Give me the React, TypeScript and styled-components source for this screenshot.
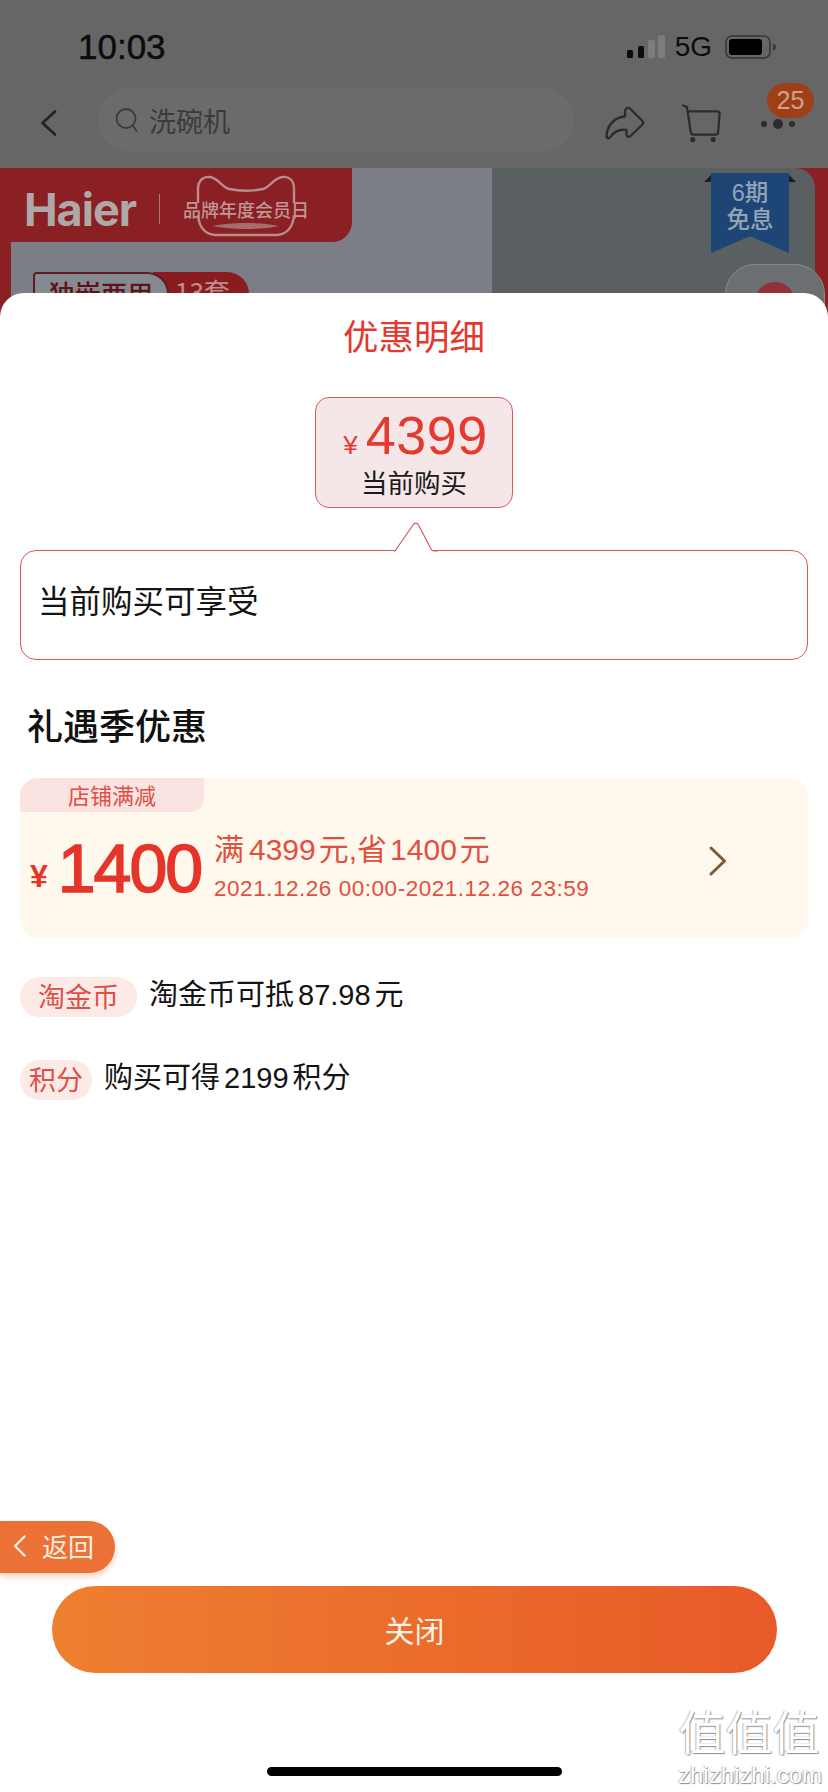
import React from "react";
import styled, { createGlobalStyle } from "styled-components";

const GlobalStyle = createGlobalStyle`
  html, body {
    margin: 0;
    padding: 0;
    background: #fff;
  }
  * {
    box-sizing: border-box;
  }
`;

const FONT = `"Liberation Sans", "Noto Sans CJK SC", sans-serif`;
const CJK = `"Noto Sans CJK SC", "Liberation Sans", sans-serif`;

const Page = styled.div`
  position: relative;
  width: 828px;
  height: 1792px;
  overflow: hidden;
  display: flex;
  flex-direction: column;
  background: #666;
  font-family: ${FONT};
`;

const StatusBar = styled.div`
  height: 88px;
  display: flex;
  align-items: center;
  padding: 6px 50px 0 78px;
`;

const Time = styled.div`
  font-size: 35px;
  font-weight: 500;
  color: #0c0c0c;
  margin-right: auto;
  -webkit-text-stroke: 0.5px #0c0c0c;
`;

const Network = styled.div`
  font-size: 28px;
  color: #0c0c0c;
  margin: 0 13px 0 10px;
`;

const NavBar = styled.div`
  height: 64px;
  margin-bottom: 16px;
  display: flex;
  align-items: center;
  padding-left: 40px;
`;

const NavIcon = styled.svg`
  margin-top: 6px;
`;

const SearchPill = styled.div`
  width: 476px;
  height: 64px;
  margin: 0 31px 0 41px;
  border-radius: 32px;
  background: #6b6b6b;
  display: flex;
  align-items: center;
  padding-left: 17px;
  gap: 10px;
  font-family: ${CJK};
  font-size: 27px;
  color: #3b3b3b;
`;

const CartIcon = styled(NavIcon)`
  margin-left: 37px;
  margin-right: 38px;
`;

const MoreWrap = styled.div`
  position: relative;
  width: 36px;
  height: 14px;
  margin-top: 8px;
`;

const CountBadge = styled.div`
  position: absolute;
  left: 6px;
  top: -34px;
  width: 47px;
  height: 35px;
  border-radius: 18px;
  background: #9f3f18;
  color: #cfa28a;
  font-size: 25px;
  line-height: 35px;
  text-align: center;
`;

const Hero = styled.div`
  position: relative;
  height: 149px;
  overflow: hidden;
  background: #8a2024;
  padding: 13px 13px 0 11px;
  flex-shrink: 0;
`;

const HeroPanel = styled.div`
  height: 200px;
  border-radius: 0 20px 0 0;
  background: linear-gradient(90deg, #7b7f85 0, #7b7f85 481px, #5a5f62 481px);
`;

const BrandTab = styled.div`
  width: 352px;
  height: 74px;
  margin: -13px 0 0 -11px;
  background: #8a2024;
  border-radius: 0 0 20px 0;
  display: flex;
  align-items: center;
  padding: 8px 0 0 24px;
`;

const BrandName = styled.div`
  width: 112px;
  font-family: "Inter", ${FONT};
  font-size: 45px;
  font-weight: 700;
  letter-spacing: -1px;
  color: #b0a8a8;
`;

const BrandDivider = styled.div`
  width: 1px;
  height: 30px;
  margin: 0 23px 0 23px;
  background: #a9797a;
`;

const BrandEvent = styled.div`
  position: relative;
  font-family: ${CJK};
  font-size: 18px;
  font-weight: 500;
  color: #c09596;
  white-space: nowrap;
`;

const CatOutline = styled.svg`
  position: absolute;
  left: 12px;
  top: -21px;
`;

const HeroTags = styled.div`
  display: flex;
  margin: 30px 0 0 22px;
  height: 44px;
  font-family: ${CJK};
  font-size: 26px;
  line-height: 38px;
`;

const TagLabel = styled.div`
  width: 136px;
  border: 2px solid #5d1c1f;
  border-radius: 4px 22px 0 0;
  color: #5d1416;
  font-weight: 500;
  text-align: center;
  background: #858a90;
  position: relative;
  z-index: 1;
`;

const TagCount = styled.div`
  width: 96px;
  margin-left: -16px;
  padding-left: 22px;
  border-radius: 0 22px 0 0;
  background: #8a1c20;
  color: #bd8f8f;
`;

const RibbonWrap = styled.div`
  position: absolute;
  left: 711px;
  top: 5px;
  width: 78px;
  height: 80px;

  &::before,
  &::after {
    content: "";
    position: absolute;
    top: 2px;
    border-bottom: 7px solid #1b1c22;
  }
  &::before {
    left: -7px;
    border-left: 7px solid transparent;
  }
  &::after {
    right: -7px;
    border-right: 7px solid transparent;
  }
`;

const RibbonBody = styled.div`
  height: 100%;
  background: #1d4676;
  clip-path: polygon(0 0, 100% 0, 100% 100%, 50% 79%, 0 100%);
  color: #93a2b4;
  font-family: ${FONT};
  font-size: 23.5px;
  font-weight: 500;
  line-height: 27px;
  text-align: center;
  padding-top: 7px;
`;

const FloatButton = styled.div`
  position: absolute;
  left: 725px;
  top: 96px;
  width: 100px;
  height: 90px;
  border: 1px solid #878b8d;
  border-radius: 30px;
  background: #6b6f71;
  display: flex;
  justify-content: center;
  padding-top: 17px;

  &::after {
    content: "";
    width: 40px;
    height: 40px;
    border-radius: 50%;
    background: #933038;
  }
`;

const Sheet = styled.div`
  position: relative;
  z-index: 2;
  flex: 1;
  margin-top: -24px;
  border-radius: 24px 24px 0 0;
  background: #fff;
  display: flex;
  flex-direction: column;
  padding-top: 22px;
`;

const Title = styled.div`
  height: 40px;
  font-family: ${CJK};
  font-size: 35.5px;
  line-height: 40px;
  color: #e4382e;
  text-align: center;
`;

const PriceBox = styled.div`
  width: 198px;
  height: 111px;
  margin: 42px auto 0;
  border: 1px solid #d8595c;
  border-radius: 14px;
  background: #f5e6e7;
  display: flex;
  flex-direction: column;
  align-items: center;
  padding-top: 13px;
`;

const PriceRow = styled.div`
  display: flex;
  align-items: baseline;
  color: #e63a30;
  line-height: 48px;
  margin-left: 3px;
`;

const PriceYen = styled.span`
  font-size: 26px;
  margin-right: 8px;
`;

const PriceValue = styled.span`
  font-size: 54px;
  letter-spacing: 0.5px;
`;

const PriceCaption = styled.div`
  font-family: ${CJK};
  font-size: 26.5px;
  line-height: 26px;
  color: #1a1a1a;
`;

const Bubble = styled.div`
  position: relative;
  height: 110px;
  margin: 42px 20px 0;
  border: 1px solid #d8595c;
  border-radius: 16px;
  padding: 26px 0 0 17px;
  font-family: ${CJK};
  font-size: 31.5px;
  line-height: 44px;
  color: #141414;
`;

const BubbleTip = styled.svg`
  position: absolute;
  left: 373px;
  top: -29px;
`;

const SectionTitle = styled.div`
  height: 50px;
  margin: 39px 0 0 27px;
  font-family: ${CJK};
  font-size: 36px;
  font-weight: 500;
  line-height: 50px;
  color: #111;
`;

const DealCard = styled.div`
  height: 160px;
  margin: 29px 20px 0;
  border-radius: 18px;
  background: #fff8ec;
  display: flex;
  flex-direction: column;
`;

const DealTag = styled.div`
  width: 184px;
  height: 34px;
  border-radius: 18px 0 14px 0;
  background: #fae3e0;
  font-family: ${CJK};
  font-size: 22px;
  line-height: 32px;
  color: #df4f48;
  text-align: center;
`;

const DealBody = styled.div`
  display: flex;
  align-items: center;
  padding-left: 10px;
  margin-top: 11px;
`;

const DealAmount = styled.div`
  display: flex;
  align-items: center;
  color: #e5352b;
  width: 184px;
  margin-top: 5px;
`;

const DealYen = styled.span`
  font-size: 32px;
  font-weight: 700;
  margin: 16px 10px 0 0;
`;

const DealValue = styled.span`
  font-size: 68px;
  line-height: 70px;
  letter-spacing: -2px;
  -webkit-text-stroke: 1.6px #e5352b;
`;

const DealInfo = styled.div`
  color: #e0503f;
  width: 495px;
  margin-top: 7px;
`;

const DealHeadline = styled.div`
  font-size: 30px;
  line-height: 40px;
`;

const DealPeriod = styled.div`
  font-size: 22.5px;
  line-height: 38px;
  letter-spacing: 0.53px;
  white-space: nowrap;
`;

const DealArrow = styled.svg`
  margin-bottom: 10px;
`;

const Gap = styled.span`
  display: inline-block;
  width: ${(p: { $w: number }) => p.$w}px;
`;

const BenefitRow = styled.div<{ $top: number; $gap: number }>`
  display: flex;
  align-items: center;
  height: 40px;
  margin: ${(p) => p.$top}px 0 0 20px;
  gap: ${(p) => p.$gap}px;
`;

const BenefitPill = styled.div<{ $width: number }>`
  width: ${(p) => p.$width}px;
  height: 40px;
  border-radius: 20px;
  background: #fbeae6;
  color: #df4f48;
  font-family: ${CJK};
  font-size: 27px;
  line-height: 37px;
  text-align: center;
`;

const BenefitText = styled.div`
  font-size: 29px;
  color: #141414;
  margin-bottom: 10px;
`;

const CloseButton = styled.div`
  height: 87px;
  margin: auto 51px 0 52px;
  border-radius: 44px;
  background: linear-gradient(90deg, #ee7f30, #e85a28);
  color: #fdf0e4;
  font-family: ${CJK};
  font-size: 30px;
  line-height: 87px;
  text-align: center;
`;

const HomeBar = styled.div`
  width: 295px;
  height: 9px;
  margin: 94px auto 16px;
  border-radius: 5px;
  background: #000;
`;

const BackPill = styled.div`
  position: absolute;
  z-index: 3;
  left: 0;
  top: 1521px;
  width: 115px;
  height: 52px;
  border-radius: 0 26px 26px 0;
  background: #ec7136;
  box-shadow: 0 4px 6px rgba(236, 113, 54, 0.3);
  display: flex;
  align-items: center;
  padding: 0 0 3px 13px;
  gap: 16px;
  color: #fdeee0;
  font-family: ${CJK};
  font-size: 26px;
`;

const Watermark = styled.div`
  position: absolute;
  z-index: 3;
  left: 678px;
  top: 1704px;
  width: 142px;
  text-align: center;
  color: #fff;
  text-shadow: 1px 1px 1px #8e8e8e, -1px 0 1px #bdbdbd;
`;

const WatermarkMark = styled.div`
  font-family: ${FONT};
  font-size: 47px;
  line-height: 60px;
  white-space: nowrap;
`;

const WatermarkSite = styled.div`
  font-size: 24px;
  line-height: 22px;
  white-space: nowrap;
`;

const App: React.FC = () => {
  return (
    <Page>
      <GlobalStyle />
      <StatusBar>
        <Time>10:03</Time>
        <svg width="38" height="24" viewBox="0 0 38 24">
          <rect x="0" y="15" width="6" height="8" rx="1.5" fill="#0c0c0c" />
          <rect x="11" y="11" width="6" height="12" rx="1.5" fill="#0c0c0c" />
          <rect x="21" y="5" width="7" height="18" rx="1.5" fill="#7c7c7c" />
          <rect x="31" y="0" width="7" height="23" rx="1.5" fill="#7c7c7c" />
        </svg>
        <Network>5G</Network>
        <svg width="53" height="24" viewBox="0 0 53 24">
          <rect x="1" y="1" width="44" height="22" rx="6" fill="none" stroke="#363636" strokeWidth="1.6" />
          <rect x="4" y="4" width="33" height="16" rx="3" fill="#000" />
          <path d="M48 8.5c2 .6 3 2 3 3.5s-1 2.900-3 3.500z" fill="#363636" />
        </svg>
      </StatusBar>

      <NavBar>
        <NavIcon width="17" height="26" viewBox="0 0 17 26">
          <path d="M15 1.500L2.500 13L15 24.500" fill="none" stroke="#222" strokeWidth="2.600" strokeLinecap="round" strokeLinejoin="round" />
        </NavIcon>
        <SearchPill>
          <svg width="24" height="26" viewBox="0 0 24 26">
            <circle cx="11" cy="11.500" r="9.500" fill="none" stroke="#3b3b3b" strokeWidth="1.800" />
            <path d="M18 19L21.500 24" stroke="#3b3b3b" strokeWidth="1.800" strokeLinecap="round" />
          </svg>
          洗碗机
        </SearchPill>
        <NavIcon width="40" height="34" viewBox="0 0 40 34">
          <path
            d="M21 3C22 1.500 24 1.500 25.500 3L37 14.500C38.500 16 38.500 17.500 37 19L25.500 30C24 31.500 21.500 30.500 21.500 28.500V24C14 23 9 25.500 5 31.500C3.500 33 1.500 32 1.500 30C2 19 10 11 20 10.500V5C20 4 20.500 3.500 21 3Z"
            fill="none"
            stroke="#2c2c2c"
            strokeWidth="2.400"
            strokeLinejoin="round"
          />
        </NavIcon>
        <CartIcon width="41" height="40" viewBox="0 0 42 40">
          <path d="M1 2L5 3.500L9 29.500C9.500 31.500 10.500 32 12 32H34C36 32 37 31 37 29.500L38.500 10.500C38.500 9 37.500 8 36 8H6" fill="none" stroke="#2c2c2c" strokeWidth="2.300" strokeLinecap="round" strokeLinejoin="round" />
          <circle cx="11" cy="37" r="2.600" fill="#2c2c2c" />
          <circle cx="32" cy="37" r="2.600" fill="#2c2c2c" />
        </CartIcon>
        <MoreWrap>
          <svg width="36" height="14" viewBox="0 0 36 14">
            <circle cx="3" cy="7" r="3" fill="#2c2c2c" />
            <circle cx="17" cy="7" r="5" fill="#2c2c2c" />
            <circle cx="31" cy="7" r="3" fill="#2c2c2c" />
          </svg>
          <CountBadge>25</CountBadge>
        </MoreWrap>
      </NavBar>

      <Hero>
        <HeroPanel>
          <BrandTab>
            <BrandName>Haier</BrandName>
            <BrandDivider />
            <BrandEvent>
              <CatOutline width="102" height="62" viewBox="0 0 102 62">
                <path
                  d="M3 28V14C3 5 9 1 15 2C23 3 27 12 34 14C44 16 58 16 68 14C75 12 79 3 87 2C94 1 99 5 99 14V28M3 40C4 52 10 59 20 60H82C92 59 98 52 99 40"
                  fill="none"
                  stroke="#b98c8d"
                  strokeWidth="2.400"
                />
                <path d="M18 51C35 47 67 47 84 51C67 55 35 55 18 51Z" fill="#a56c6d" />
              </CatOutline>
              品牌年度会员日
            </BrandEvent>
          </BrandTab>
          <HeroTags>
            <TagLabel>独嵌两用</TagLabel>
            <TagCount>13套</TagCount>
          </HeroTags>
        </HeroPanel>
        <RibbonWrap>
          <RibbonBody>
            6期
            <br />
            免息
          </RibbonBody>
        </RibbonWrap>
        <FloatButton />
      </Hero>

      <Sheet>
        <Title>优惠明细</Title>
        <PriceBox>
          <PriceRow>
            <PriceYen>¥</PriceYen>
            <PriceValue>4399</PriceValue>
          </PriceRow>
          <PriceCaption>当前购买</PriceCaption>
        </PriceBox>
        <Bubble>
          <BubbleTip width="44" height="30" viewBox="0 0 44 30">
            <path
              d="M0 29H1L19 3C20.500 0.600 23 0.600 24.500 3L37 27C37.500 28.500 38.500 29 40 29H44"
              fill="#fff"
              stroke="#d8595c"
              strokeWidth="1.200"
            />
          </BubbleTip>
          当前购买可享受
        </Bubble>
        <SectionTitle>礼遇季优惠</SectionTitle>
        <DealCard>
          <DealTag>店铺满减</DealTag>
          <DealBody>
            <DealAmount>
              <DealYen>¥</DealYen>
              <DealValue>1400</DealValue>
            </DealAmount>
            <DealInfo>
              <DealHeadline>
                满<Gap $w={5} />4399<Gap $w={3} />元,省<Gap $w={3} />1400<Gap $w={3} />元
              </DealHeadline>
              <DealPeriod>2021.12.26 00:00-2021.12.26 23:59</DealPeriod>
            </DealInfo>
            <DealArrow width="18" height="30" viewBox="0 0 18 30">
              <path d="M2 2L15.500 15L2 28" fill="none" stroke="#7d5a34" strokeWidth="3" strokeLinecap="round" strokeLinejoin="round" />
            </DealArrow>
          </DealBody>
        </DealCard>
        <BenefitRow $top={39} $gap={12}>
          <BenefitPill $width={117}>淘金币</BenefitPill>
          <BenefitText>
            淘金币可抵<Gap $w={4} />87.98<Gap $w={4} />元
          </BenefitText>
        </BenefitRow>
        <BenefitRow $top={43} $gap={12}>
          <BenefitPill $width={72}>积分</BenefitPill>
          <BenefitText>
            购买可得<Gap $w={4} />2199<Gap $w={4} />积分
          </BenefitText>
        </BenefitRow>
        <CloseButton>关闭</CloseButton>
        <HomeBar />
      </Sheet>

      <BackPill>
        <svg width="13" height="22" viewBox="0 0 13 22">
          <path d="M11.500 1.500L2 11L11.500 20.500" fill="none" stroke="#fdeee0" strokeWidth="2.400" strokeLinecap="round" strokeLinejoin="round" />
        </svg>
        返回
      </BackPill>

      <Watermark>
        <WatermarkMark>值值值</WatermarkMark>
        <WatermarkSite>zhizhizhi.com</WatermarkSite>
      </Watermark>
    </Page>
  );
};

export default App;
